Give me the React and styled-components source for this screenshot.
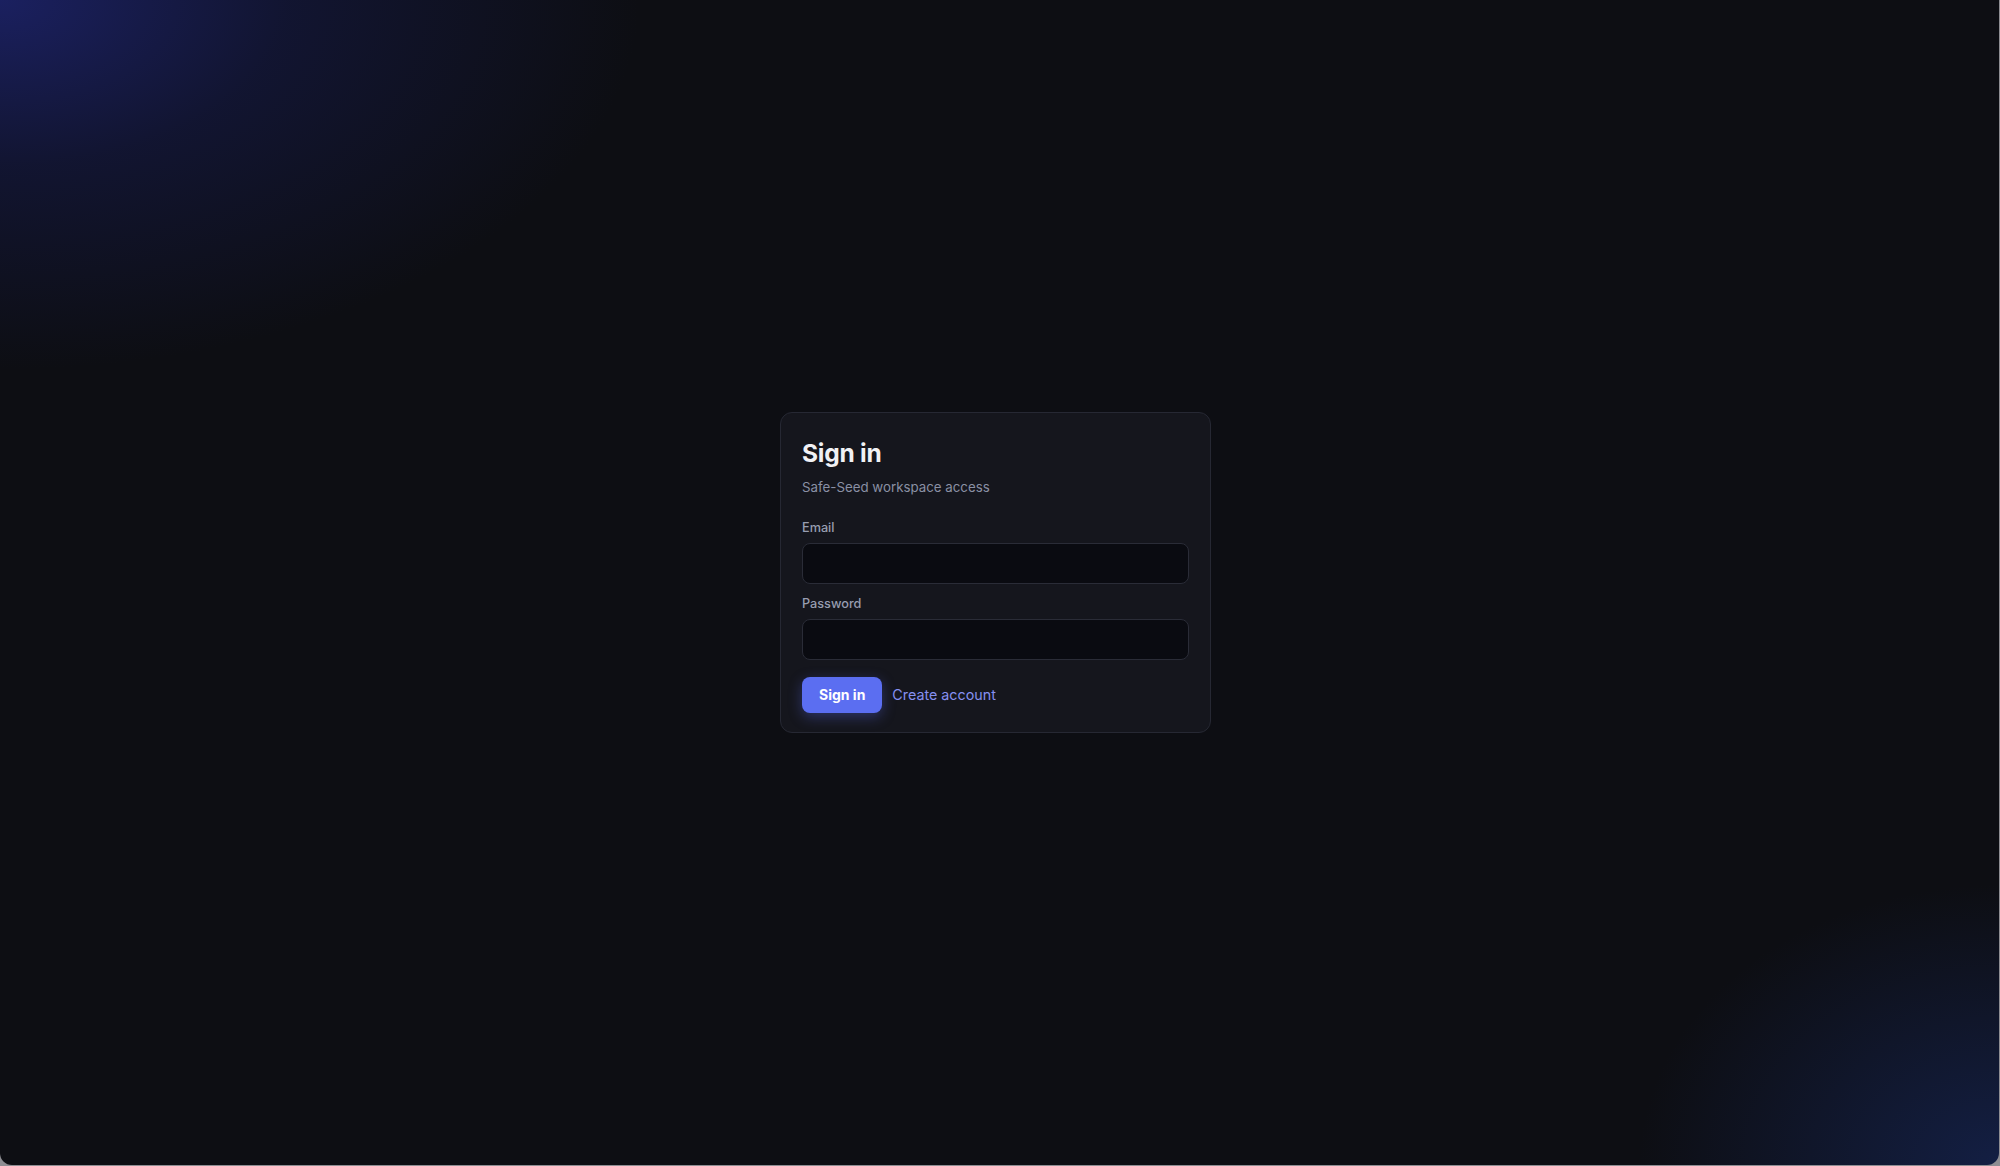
import React from 'react';
import styled, { createGlobalStyle } from 'styled-components';

const GlobalStyle = createGlobalStyle`
  html, body {
    margin: 0;
    padding: 0;
    background: #8d8d92;
    font-family: Inter, "Liberation Sans", sans-serif;
    -webkit-font-smoothing: antialiased;
  }
  * { box-sizing: border-box; }
`;

const Window = styled.div`
  width: calc(100vw - 1px);
  height: calc(100vh - 1px);
  border-radius: 0 0 12px 12px;
  overflow: hidden;
  background:
    radial-gradient(ellipse 640px 370px at 0% 0%, rgba(28, 34, 104, 0.9), rgba(22, 27, 78, 0.5) 45%, rgba(13, 14, 19, 0) 100%),
    radial-gradient(ellipse 360px 280px at 100% 100%, rgba(22, 38, 88, 0.7), rgba(13, 14, 19, 0) 100%),
    #0d0e13;
  display: grid;
  place-items: center;
  padding: 0 8px 21px 0;
`;

const Card = styled.form`
  width: 431px;
  background: #15161d;
  border: 1px solid #262833;
  border-radius: 12px;
  padding: 25px 21px 19px;
  display: flex;
  flex-direction: column;
`;

const Title = styled.h1`
  margin: 0;
  font-size: 24.5px;
  font-weight: 700;
  letter-spacing: -0.01em;
  line-height: 30px;
  color: #f0f1f5;
`;

const Subtitle = styled.p`
  margin: 11px 0 24px;
  font-size: 13.3px;
  line-height: 17px;
  color: #8a90a4;
`;

const Field = styled.label`
  display: flex;
  flex-direction: column;
  gap: 7px;
  margin-bottom: ${p => p.$last ? '17px' : '12px'};
`;

const Label = styled.span`
  font-size: 12.7px;
  font-weight: 500;
  line-height: 16px;
  color: #979db0;
`;

const Input = styled.input`
  height: 41px;
  width: 100%;
  background: #0a0b11;
  border: 1px solid #2a2c37;
  border-radius: 8px;
  padding: 0 12px;
  color: #e6e8ee;
  font-family: inherit;
  font-size: 14px;
  outline: none;
`;

const Actions = styled.div`
  display: flex;
  align-items: center;
  gap: 10px;
`;

const PrimaryButton = styled.button`
  height: 36px;
  padding: 0 17px;
  border: none;
  border-radius: 8px;
  background: #5b6ef1;
  color: #ffffff;
  font-family: inherit;
  font-size: 14px;
  font-weight: 700;
  box-shadow: 0 4px 14px rgba(91, 110, 241, 0.35);
  cursor: pointer;
`;

const LinkButton = styled.a`
  font-size: 14.3px;
  color: #8690f0;
  text-decoration: none;
  cursor: pointer;
`;

export default function App() {
  return (
    <>
      <GlobalStyle />
      <Window>
        <Card onSubmit={e => e.preventDefault()}>
          <Title>Sign in</Title>
          <Subtitle>Safe-Seed workspace access</Subtitle>
          <Field>
            <Label>Email</Label>
            <Input type="email" />
          </Field>
          <Field $last>
            <Label>Password</Label>
            <Input type="password" />
          </Field>
          <Actions>
            <PrimaryButton type="submit">Sign in</PrimaryButton>
            <LinkButton>Create account</LinkButton>
          </Actions>
        </Card>
      </Window>
    </>
  );
}
